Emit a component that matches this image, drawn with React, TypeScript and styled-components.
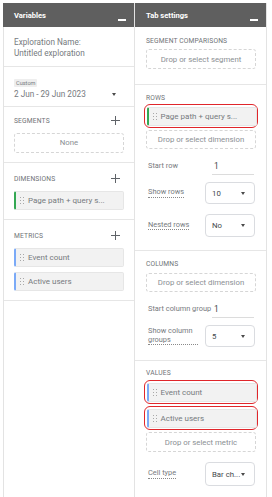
import React from "react";
import styled, { createGlobalStyle } from "styled-components";

const Global = createGlobalStyle`
  html, body { margin: 0; padding: 0; background: #ffffff; }
  body { font-family: Roboto, "Noto Sans", Arial, sans-serif; color: #767a7e; }
  * { box-sizing: border-box; }
`;

const Page = styled.div`
  display: flex;
  align-items: flex-start;
  padding: 3px 0 0 3px;
  height: 497px;
  overflow: hidden;
`;

const Panel = styled.div<{ $fill?: boolean }>`
  width: 132px;
  display: flex;
  flex-direction: column;
  border-right: 1px solid #e3e3e3;
  border-bottom: ${(p) => (p.$fill ? "none" : "1px solid #e3e3e3")};
  height: ${(p) => (p.$fill ? "494px" : "auto")};
`;

const Header = styled.div`
  height: 24px;
  background: #5f5f5f;
  color: #ffffff;
  font-weight: 700;
  font-size: 7.6px;
  display: flex;
  align-items: center;
  justify-content: space-between;
  padding: 0 8px 0 11px;
  flex-shrink: 0;
`;

const Minimize = styled.span`
  width: 8px;
  height: 1.5px;
  background: #ffffff;
  margin-top: 10px;
`;

const Body = styled.div<{ $leftBorder?: boolean }>`
  flex: 1;
  display: flex;
  flex-direction: column;
  border-left: ${(p) => (p.$leftBorder ? "1px solid #e3e3e3" : "none")};
`;

const Section = styled.div<{ $pt: number; $pb: number; $last?: boolean }>`
  display: flex;
  flex-direction: column;
  padding: ${(p) => p.$pt}px 10px ${(p) => p.$pb}px 10px;
  border-bottom: ${(p) => (p.$last ? "none" : "1px solid #e6e6e6")};
`;

const RightSection = styled(Section)`
  padding-left: 11px;
  padding-right: 10px;
`;

const Text = styled.div`
  font-size: 8.2px;
  line-height: 11px;
  color: #767a7e;
`;

const CustomChip = styled.span`
  align-self: flex-start;
  height: 8px;
  line-height: 8px;
  font-size: 5.6px;
  padding: 0 2px;
  background: #eeeeee;
  border-radius: 1px;
  color: #767a7e;
  margin-bottom: 1.5px;
`;

const DateRow = styled.div`
  display: flex;
  align-items: center;
  justify-content: space-between;
  padding-right: 8px;
`;

const Caret = styled.span`
  width: 0;
  height: 0;
  border-left: 2.5px solid transparent;
  border-right: 2.5px solid transparent;
  border-top: 3px solid #4a4a4a;
`;

const SectionHead = styled.div<{ $h?: number }>`
  height: ${(p) => p.$h ?? 12}px;
  display: flex;
  align-items: center;
  justify-content: space-between;
  font-size: 6.7px;
  letter-spacing: 0.15px;
  text-transform: uppercase;
  color: #6f7377;
`;

const Plus = styled.span`
  position: relative;
  width: 9px;
  height: 9px;
  margin-right: 4px;
  &::before, &::after {
    content: "";
    position: absolute;
    background: #5f6368;
  }
  &::before { left: 0; right: 0; top: 4px; height: 1px; }
  &::after { top: 0; bottom: 0; left: 4px; width: 1px; }
`;

const DropBox = styled.div<{ $mt: number; $h?: number }>`
  margin-top: ${(p) => p.$mt}px;
  height: ${(p) => p.$h ?? 20}px;
  border: 1px dashed #d6d6d6;
  border-radius: 3px;
  display: flex;
  align-items: center;
  justify-content: center;
  font-size: 7.8px;
  color: #8b8f93;
`;

const Chip = styled.div<{ $accent: string; $mt?: number }>`
  margin-top: ${(p) => p.$mt ?? 0}px;
  height: 19px;
  background: #f2f2f2;
  border: 1px solid #e6e6e6;
  border-left: 2px solid ${(p) => p.$accent};
  border-radius: 2px;
  display: flex;
  align-items: center;
  gap: 4px;
  padding-left: 4px;
  font-size: 8px;
  color: #767a7e;
  white-space: nowrap;
`;

const Handle = styled.span`
  display: grid;
  grid-template-columns: 1px 1px;
  grid-template-rows: 1px 1px 1px;
  column-gap: 2px;
  row-gap: 2px;
  span { width: 1px; height: 1px; background: #a8a8a8; }
`;

const Highlight = styled.div<{ $mt: number }>`
  margin: ${(p) => p.$mt}px -2px 0 -2px;
  border: 1.5px solid #e0262b;
  border-radius: 6px;
  padding: 1.5px 0.5px 1.5px 1.5px;
`;

const FieldRow = styled.div<{ $mt: number; $h: number }>`
  margin-top: ${(p) => p.$mt}px;
  height: ${(p) => p.$h}px;
  display: flex;
  align-items: center;
  justify-content: space-between;
  padding-left: 2px;
`;

const FieldLabel = styled.span<{ $dotted?: boolean; $w?: number }>`
  font-size: 7.4px;
  line-height: 8.5px;
  color: #767a7e;
  ${(p) => (p.$w ? `width: ${p.$w}px;` : "")}
  ${(p) => (p.$dotted ? "border-bottom: 1px dotted #8a8a8a;" : "")}
`;

const TextInput = styled.div`
  width: 42px;
  align-self: stretch;
  display: flex;
  align-items: center;
  padding-left: 2px;
  border-bottom: 1px solid #dcdcdc;
  font-size: 8.4px;
  color: #44484c;
  margin-right: 2px;
`;

const Select = styled.div<{ $h: number }>`
  width: 50px;
  height: ${(p) => p.$h}px;
  border: 1px solid #dadce0;
  border-radius: 4px;
  display: flex;
  align-items: center;
  justify-content: space-between;
  padding: 0 9px 0 6px;
  font-size: 7.8px;
  color: #44484c;
  margin-right: 1px;
`;

const DragHandle = () => (
  <Handle>
    <span />
    <span />
    <span />
    <span />
    <span />
    <span />
  </Handle>
);

const GREEN = "#34a853";
const BLUE = "#7baaf7";

export default function App() {
  return (
    <>
      <Global />
      <Page>
        <Panel $fill>
          <Header>
            <span>Variables</span>
            <Minimize />
          </Header>
          <Body $leftBorder>
            <Section $pt={10} $pb={7}>
              <Text>Exploration Name:</Text>
              <Text>Untitled exploration</Text>
            </Section>
            <Section $pt={12} $pb={6}>
              <CustomChip>Custom</CustomChip>
              <DateRow>
                <Text>2 Jun - 29 Jun 2023</Text>
                <Caret />
              </DateRow>
            </Section>
            <Section $pt={8} $pb={9}>
              <SectionHead>
                <span>Segments</span>
                <Plus />
              </SectionHead>
              <DropBox $mt={6}>None</DropBox>
            </Section>
            <Section $pt={10} $pb={9}>
              <SectionHead>
                <span>Dimensions</span>
                <Plus />
              </SectionHead>
              <Chip $accent={GREEN} $mt={6}>
                <DragHandle />
                Page path + query s...
              </Chip>
            </Section>
            <Section $pt={10} $pb={9}>
              <SectionHead>
                <span>Metrics</span>
                <Plus />
              </SectionHead>
              <Chip $accent={BLUE} $mt={6}>
                <DragHandle />
                Event count
              </Chip>
              <Chip $accent={BLUE} $mt={5}>
                <DragHandle />
                Active users
              </Chip>
            </Section>
          </Body>
        </Panel>
        <Panel>
          <Header>
            <span>Tab settings</span>
            <Minimize />
          </Header>
          <Body>
            <RightSection $pt={9} $pb={15}>
              <SectionHead $h={10}>Segment comparisons</SectionHead>
              <DropBox $mt={3}>Drop or select segment</DropBox>
            </RightSection>
            <RightSection $pt={8} $pb={13}>
              <SectionHead $h={10}>Rows</SectionHead>
              <Highlight $mt={1}>
                <Chip $accent={GREEN}>
                  <DragHandle />
                  Page path + query s...
                </Chip>
              </Highlight>
              <DropBox $mt={2} $h={19}>
                Drop or select dimension
              </DropBox>
              <FieldRow $mt={9} $h={17}>
                <FieldLabel>Start row</FieldLabel>
                <TextInput>1</TextInput>
              </FieldRow>
              <FieldRow $mt={7} $h={22}>
                <FieldLabel $dotted>Show rows</FieldLabel>
                <Select $h={22}>
                  <span>10</span>
                  <Caret />
                </Select>
              </FieldRow>
              <FieldRow $mt={10} $h={23}>
                <FieldLabel $dotted>Nested rows</FieldLabel>
                <Select $h={23}>
                  <span>No</span>
                  <Caret />
                </Select>
              </FieldRow>
            </RightSection>
            <RightSection $pt={8} $pb={13}>
              <SectionHead $h={10}>Columns</SectionHead>
              <DropBox $mt={4} $h={19}>
                Drop or select dimension
              </DropBox>
              <FieldRow $mt={9} $h={17}>
                <FieldLabel>Start column group</FieldLabel>
                <TextInput>1</TextInput>
              </FieldRow>
              <FieldRow $mt={7} $h={22}>
                <FieldLabel $dotted $w={50}>
                  Show column groups
                </FieldLabel>
                <Select $h={22}>
                  <span>5</span>
                  <Caret />
                </Select>
              </FieldRow>
            </RightSection>
            <RightSection $pt={7} $pb={12} $last>
              <SectionHead $h={10}>Values</SectionHead>
              <Highlight $mt={2}>
                <Chip $accent={BLUE}>
                  <DragHandle />
                  Event count
                </Chip>
              </Highlight>
              <Highlight $mt={2}>
                <Chip $accent={BLUE}>
                  <DragHandle />
                  Active users
                </Chip>
              </Highlight>
              <DropBox $mt={2}>Drop or select metric</DropBox>
              <FieldRow $mt={10} $h={24}>
                <FieldLabel $dotted>Cell type</FieldLabel>
                <Select $h={24}>
                  <span>Bar ch...</span>
                  <Caret />
                </Select>
              </FieldRow>
            </RightSection>
          </Body>
        </Panel>
      </Page>
    </>
  );
}
